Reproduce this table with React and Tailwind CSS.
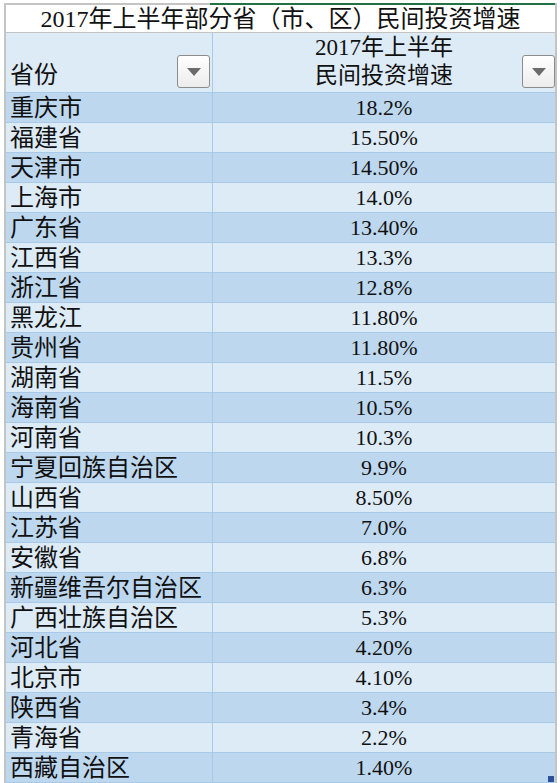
import React from 'react';

const rows = [
  ['重庆市', '18.2%'],
  ['福建省', '15.50%'],
  ['天津市', '14.50%'],
  ['上海市', '14.0%'],
  ['广东省', '13.40%'],
  ['江西省', '13.3%'],
  ['浙江省', '12.8%'],
  ['黑龙江', '11.80%'],
  ['贵州省', '11.80%'],
  ['湖南省', '11.5%'],
  ['海南省', '10.5%'],
  ['河南省', '10.3%'],
  ['宁夏回族自治区', '9.9%'],
  ['山西省', '8.50%'],
  ['江苏省', '7.0%'],
  ['安徽省', '6.8%'],
  ['新疆维吾尔自治区', '6.3%'],
  ['广西壮族自治区', '5.3%'],
  ['河北省', '4.20%'],
  ['北京市', '4.10%'],
  ['陕西省', '3.4%'],
  ['青海省', '2.2%'],
  ['西藏自治区', '1.40%'],
];

const FilterButton = () => (
  <div className="w-[33px] h-[33px] shrink-0 rounded-[3px] border border-[#8c8c8c] bg-gradient-to-b from-white to-[#ececec] flex items-center justify-center">
    <svg width="16" height="10" viewBox="0 0 16 10">
      <path d="M1 1 L15 1 L8 9 Z" fill="#6b6b6b" />
    </svg>
  </div>
);

const App = () => {
  return (
    <div
      className="w-[560px] h-[783px] bg-white pl-[4px] pt-[3px] overflow-hidden text-[#111]"
      style={{ fontFamily: '"Liberation Serif", "Noto Sans CJK SC", serif' }}
    >
      <div className="relative w-[553px] border-l-2 border-r-2 border-[#c4c4c4]">
        {/* Title */}
        <div className="relative h-[30px] border-t-2 border-b border-[#c4c4c4] bg-white flex items-center justify-center text-[24px] leading-none">
          <div className="absolute left-[204px] right-0 -top-[2px] h-[2px] bg-[#217346]" />
          2017年上半年部分省（市、区）民间投资增速
        </div>

        {/* Header */}
        <div className="grid grid-cols-[206px_1px_1fr] h-[60px] bg-[#ddebf7] border-b border-[#a9c9e8]">
          <div className="flex items-end justify-between pl-[4px] pr-[2px] pb-[3px]">
            <span className="text-[24px] leading-[28px]">省份</span>
            <div className="mb-[1px]"><FilterButton /></div>
          </div>
          <div className="bg-[#a9c9e8]" />
          <div className="relative flex flex-col items-center justify-end pb-[2px] text-[23px] leading-[28px]">
            <span>2017年上半年</span>
            <span>民间投资增速</span>
            <div className="absolute right-0 bottom-[4px]"><FilterButton /></div>
          </div>
        </div>

        {/* Data rows */}
        {rows.map(([name, value], i) => (
          <div
            key={name}
            className={`grid grid-cols-[206px_1px_1fr] h-[30px] border-b border-[#a9c9e8] ${i % 2 === 0 ? 'bg-[#bdd7ee]' : 'bg-[#ddebf7]'}`}
          >
            <div className="pl-[4px] flex items-center text-[24px] leading-none whitespace-nowrap">{name}</div>
            <div className="bg-[#a9c9e8]" />
            <div className="flex items-center justify-center text-[22px] leading-none">{value}</div>
          </div>
        ))}

        <div className="absolute right-[1px] bottom-[1px] w-[6px] h-[6px] bg-[#2f4f9a]" />
      </div>
    </div>
  );
};

export default App;
